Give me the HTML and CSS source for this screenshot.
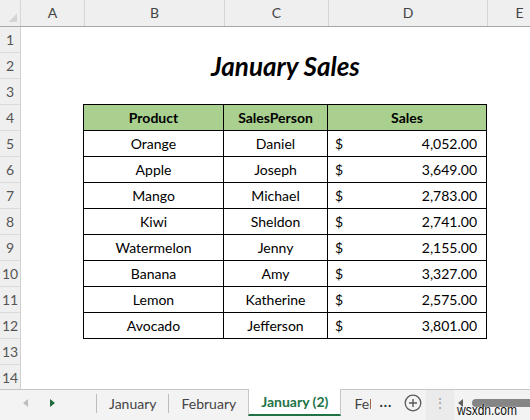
FILE: index.html
```html
<!DOCTYPE html>
<html>
    <head>
        <meta charset="UTF-8">
        <title>January Sales</title>
        <meta name="viewport" content="width=device-width, initial-scale=1.0">
        <link rel="stylesheet" href="styles.css">
    </head>
    <body>
        <div class="sheet">
            <div class="col-heads">
                <div class="corner"></div>
                <div class="col-head">A</div>
                <div class="col-head">B</div>
                <div class="col-head">C</div>
                <div class="col-head">D</div>
                <div class="col-head">E</div>
            </div>
            <div class="grid-body">
                <div class="row-heads">
                    <div>1</div><div>2</div><div>3</div><div>4</div><div>5</div>
                    <div>6</div><div>7</div><div>8</div><div>9</div><div>10</div>
                    <div>11</div><div>12</div><div>13</div><div>14</div>
                </div>
                <div class="cells">
                    <h1 class="title">January Sales</h1>
                    <div class="sales">
                        <div class="head">Product</div>
                        <div class="head">SalesPerson</div>
                        <div class="head">Sales</div>
                    </div>
                </div>
            </div>
        </div>

        <div class="tabbar">
            <div class="nav">
                <svg class="arrow off" width="5" height="8" viewBox="0 0 5 8"><path d="M5 0V8L0 4Z"/></svg>
                <svg class="arrow on" width="5" height="8" viewBox="0 0 5 8"><path d="M0 0V8L5 4Z"/></svg>
            </div>
            <div class="tab">January</div>
            <div class="tab">February</div>
            <div class="tab active">January (2)</div>
            <div class="tab clipped">Feb</div>
            <div class="more">...</div>
            <div class="add">
                <svg width="18" height="18" viewBox="0 0 18 18">
                    <circle cx="9" cy="9" r="7.8" fill="none" stroke="#5a5a5a" stroke-width="1.3"/>
                    <path d="M9 5V13M5 9H13" stroke="#5a5a5a" stroke-width="1.4"/>
                </svg>
            </div>
            <div class="splitter">⋮</div>
            <div class="hscroll">
                <svg class="arrow" width="5" height="8" viewBox="0 0 5 8"><path d="M5 0V8L0 4Z"/></svg>
                <div class="thumb"></div>
            </div>
            <span class="mark">wsxdn.com</span>
        </div>

        <script>
            // Rows of the sales table
            const rows = [
                ['Orange', 'Daniel', '4,052.00'],
                ['Apple', 'Joseph', '3,649.00'],
                ['Mango', 'Michael', '2,783.00'],
                ['Kiwi', 'Sheldon', '2,741.00'],
                ['Watermelon', 'Jenny', '2,155.00'],
                ['Banana', 'Amy', '3,327.00'],
                ['Lemon', 'Katherine', '2,575.00'],
                ['Avocado', 'Jefferson', '3,801.00']
            ];

            const sales = document.querySelector('.sales');
            rows.forEach(row =>
            {
                sales.insertAdjacentHTML('beforeend',
                    `<div>${row[0]}</div><div>${row[1]}</div>` +
                    `<div class="amount"><span>$</span><span>${row[2]}</span></div>`);
            });
        </script>
    </body>
</html>
```

FILE: styles.css
```css
body
{
    margin: 0;
    width: 530px;
    height: 420px;
    overflow: hidden;
    position: relative;
    background-color: #FFFFFF;
    font-family: Lato, 'Open Sans', sans-serif;
    font-size: 14px;
    color: #000000;
}

.sheet
{
    height: 389px;
    overflow: hidden;
}

/* column letters */
.col-heads
{
    display: grid;
    grid-template-columns: 21px 64px 140px 104px 159px 64px;
    height: 27px;
    box-sizing: border-box;
    background-color: #EFEFEF;
    border-bottom: 1px solid #A8A8A8;
}
.col-heads > div
{
    box-sizing: border-box;
    border-right: 1px solid #D6D6D6;
    line-height: 26px;
    text-align: center;
    color: #444444;
}
.corner
{
    background: linear-gradient(to bottom right, transparent 50%, #D4D4D4 50%) no-repeat right 3px bottom 4px / 9px 9px;
}

.grid-body
{
    display: flex;
}

/* row numbers */
.row-heads
{
    width: 21px;
    flex-shrink: 0;
    background-color: #EFEFEF;
    border-right: 1px solid #D0D0D0;
    box-sizing: border-box;
}
.row-heads div
{
    height: 26px;
    box-sizing: border-box;
    border-bottom: 1px solid #DADADA;
    line-height: 26px;
    text-align: center;
    color: #555555;
}

.cells
{
    flex: 1;
}

.title
{
    margin: 26px 0 25px 63px;
    width: 403px;
    height: 26px;
    line-height: 26px;
    text-align: center;
    font-size: 26px;
    font-weight: 700;
    font-style: italic;
}

/* the sales table */
.sales
{
    display: grid;
    grid-template-columns: 140px 104px 159px;
    width: max-content;
    margin-left: 62px;
    border-top: 1px solid #000000;
    border-left: 1px solid #000000;
}
.sales > div
{
    height: 26px;
    box-sizing: border-box;
    border-right: 1px solid #000000;
    border-bottom: 1px solid #000000;
    line-height: 25px;
    text-align: center;
}
.sales .head
{
    background-color: #A9D08E;
    font-weight: 700;
}
.sales .amount
{
    display: flex;
    justify-content: space-between;
    padding: 0 9px 0 7px;
}

/* sheet tabs */
.tabbar
{
    display: flex;
    align-items: flex-start;
    height: 31px;
    box-sizing: border-box;
    border-top: 1px solid #C6C6C6;
    background-color: #F3F3F3;
    color: #444444;
}
.nav
{
    display: flex;
    align-items: center;
    gap: 22px;
    width: 96px;
    height: 25px;
    padding-left: 23px;
    box-sizing: border-box;
}
.arrow.off { fill: #BDBDBD }
.arrow.on { fill: #1E6B3D }

.tab
{
    flex-shrink: 0;
    margin-top: 4px;
    height: 19px;
    padding: 0 12px;
    border-left: 1px solid #BDBDBD;
    line-height: 19px;
    white-space: nowrap;
}
.tab.active
{
    margin-top: -1px;
    height: 25px;
    line-height: 25px;
    border-right: 1px solid #C6C6C6;
    border-left: 1px solid #C6C6C6;
    border-bottom: 2px solid #217346;
    background-color: #FFFFFF;
    color: #217346;
    font-weight: 700;
}
.tab.active + .tab
{
    border-left: none;
}
.tab.clipped
{
    width: 17px;
    padding: 0 0 0 13px;
    overflow: hidden;
}
.more
{
    flex-shrink: 0;
    width: 29px;
    padding-left: 8px;
    box-sizing: border-box;
    margin-top: 2px;
    line-height: 19px;
    font-weight: 900;
    letter-spacing: 1px;
    color: #2A3A2F;
}
.add
{
    flex-shrink: 0;
    margin-top: 4px;
    width: 26px;
    height: 18px;
    padding-left: 4px;
    box-sizing: border-box;
}
.splitter
{
    flex-shrink: 0;
    width: 28px;
    height: 30px;
    line-height: 26px;
    text-align: center;
    color: #A0A0A0;
    background-color: #EBEBEB;
}
.hscroll
{
    flex: 1;
    display: flex;
    align-items: center;
    height: 26px;
    padding-left: 4px;
    gap: 9px;
}
.hscroll .arrow { fill: #606060 }
.hscroll .thumb
{
    flex: 1;
    height: 8px;
    border-radius: 4px 0 0 4px;
    background-color: #858585;
}

/* site mark over the scroll bar */
.mark
{
    position: absolute;
    left: 457px;
    top: 401px;
    font-family: 'Liberation Sans', sans-serif;
    font-size: 15px;
    color: #111111;
    text-shadow: 0 0 2px #FFFFFF;
    transform: scaleX(0.8);
    transform-origin: left center;
}
```
